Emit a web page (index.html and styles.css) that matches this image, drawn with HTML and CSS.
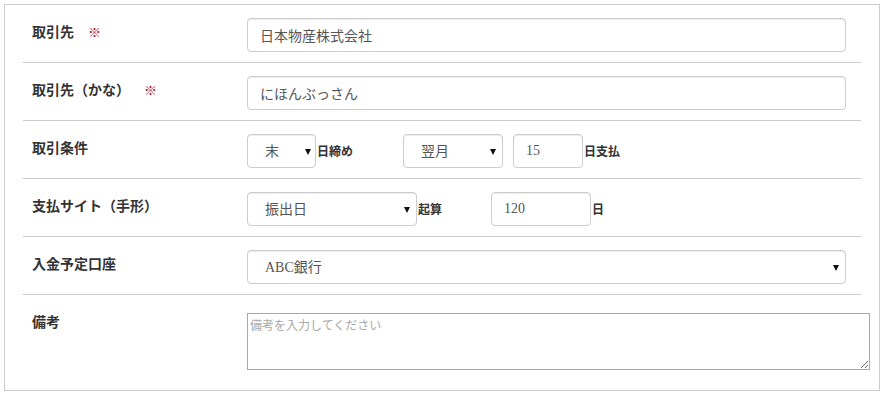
FILE: index.html
```html
<!DOCTYPE html>
<html lang="ja">
<head>
<meta charset="utf-8">
<title>取引先</title>
<link rel="stylesheet" href="styles.css">
</head>
<body>
<div class="panel">
  <div class="row">
    <div class="label">取引先<span class="req">※</span></div>
    <div class="ctrl"><input class="fc" type="text" value="日本物産株式会社"></div>
  </div>
  <div class="row">
    <div class="label">取引先（かな）<span class="req">※</span></div>
    <div class="ctrl"><input class="fc" type="text" value="にほんぶっさん"></div>
  </div>
  <div class="row">
    <div class="label">取引条件</div>
    <div class="ctrl inline">
      <span class="sel sel-close"><select class="fs"><option>末</option></select></span>
      <span class="suffix gap">日締め</span>
      <span class="sel sel-month"><select class="fs"><option>翌月</option></select></span>
      <input class="fn num-day" type="text" value="15">
      <span class="suffix">日支払</span>
    </div>
  </div>
  <div class="row">
    <div class="label">支払サイト（手形）</div>
    <div class="ctrl inline">
      <span class="sel sel-site"><select class="fs"><option>振出日</option></select></span>
      <span class="suffix gap-short">起算</span>
      <input class="fn num-site" type="text" value="120">
      <span class="suffix">日</span>
    </div>
  </div>
  <div class="row">
    <div class="label">入金予定口座</div>
    <div class="ctrl"><span class="sel sel-full"><select class="fs"><option>ABC銀行</option></select></span></div>
  </div>
  <div class="row last">
    <div class="label">備考</div>
    <div class="ctrl"><textarea class="memo" placeholder="備考を入力してください"></textarea></div>
  </div>
</div>
</body>
</html>
```

FILE: styles.css
```css
* { box-sizing: border-box; }

body {
  margin: 0;
  background: #fff;
  font-family: "Noto Sans CJK JP", "Noto Sans", sans-serif;
  color: #333;
}

.panel {
  margin: 4px;
  width: 876px;
  height: 387px;
  border: 1px solid #ccc;
  padding: 0 18px;
}

.row {
  display: flex;
  padding: 13px 0 10px;
  border-bottom: 1px solid #ccc;
}

.row.last { border-bottom: none; }

.label {
  width: 224px;
  flex: none;
  padding: 3px 0 0 9px;
  font-size: 14px;
  line-height: 20px;
  font-weight: bold;
  color: #333;
}

.req {
  margin-left: 14px;
  font-size: 13px;
  color: #a01a1a;
  font-weight: bold;
}

.ctrl {
  flex: 1;
  padding-right: 15px;
}

.ctrl.inline {
  display: flex;
  align-items: center;
}

.fc {
  display: block;
  width: 100%;
  height: 34px;
  padding: 6px 12px;
  border: 1px solid #ccc;
  border-radius: 4px;
  box-shadow: inset 0 1px 1px rgba(0,0,0,.075);
  font-family: "Noto Sans CJK JP", sans-serif;
  font-size: 14px;
  color: #555;
  outline: none;
}

.sel {
  position: relative;
  display: block;
  flex: none;
}

.sel::after {
  content: "";
  position: absolute;
  right: 7px;
  top: 15px;
  border-left: 3.5px solid transparent;
  border-right: 3.5px solid transparent;
  border-top: 6px solid #111;
  pointer-events: none;
}

.sel-close::after { right: 5px; }

.fs {
  -webkit-appearance: none;
  appearance: none;
  display: block;
  width: 100%;
  height: 34px;
  padding: 0 20px 0 17px;
  border: 1px solid #ccc;
  border-radius: 4px;
  background: #fff;
  box-shadow: inset 0 1px 1px rgba(0,0,0,.075);
  font-family: "Liberation Serif", "Noto Sans CJK JP", serif;
  font-size: 14px;
  color: #555;
  outline: none;
}

.sel-close { width: 69px; }
.sel-month { width: 100px; }
.sel-site { width: 170px; }
.sel-full { width: 100%; }

.fn {
  flex: none;
  height: 34px;
  padding: 6px 12px;
  border: 1px solid #ccc;
  border-radius: 4px;
  box-shadow: inset 0 1px 1px rgba(0,0,0,.075);
  font-family: "Liberation Serif", "Noto Sans CJK JP", serif;
  font-size: 14px;
  color: #555;
  outline: none;
}

.num-day { width: 70px; margin-left: 10px; }
.num-site { width: 100px; }

.suffix {
  margin-left: 1px;
  font-size: 12px;
  font-weight: bold;
  color: #333;
  line-height: 16px;
}

.suffix.gap { margin-right: 50px; }
.suffix.gap-short { margin-right: 49px; }

.memo {
  display: block;
  margin-top: 5px;
  width: 623px;
  height: 57px;
  padding: 2px;
  border: 1px solid #a9a9a9;
  border-radius: 0;
  font-family: "Noto Sans CJK JP", sans-serif;
  font-size: 12px;
  color: #555;
  outline: none;
}

.memo::placeholder { color: #a9a9a9; }
```
